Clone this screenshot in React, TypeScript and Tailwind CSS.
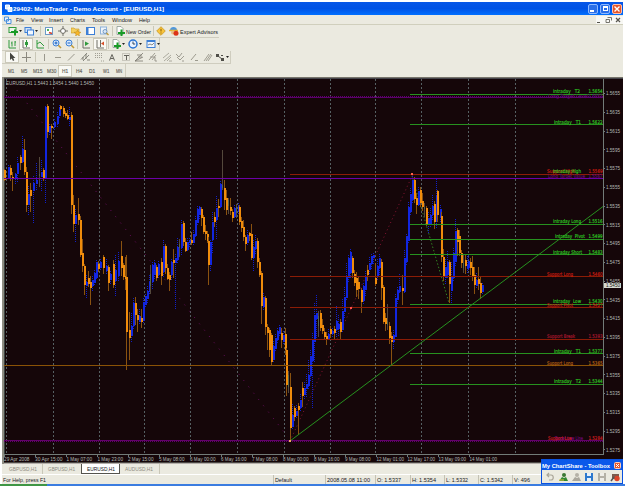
import React from 'react';

type Candle = [number, number, number, number, number, 'o' | 'b' | 'g'];

// x, body top, body bottom, wick top, wick bottom, colour
const CANDLES: Candle[] = [
  [4.5,170,180,169,181,'o'],[8.5,167,178,165,179,'b'],[10.5,168,175,165,181,'o'],[12.5,177,179,172,191,'o'],[15.5,174,179,173,184,'b'],[17.5,163,174,157,183,'b'],[20,157,163,155,170,'o'],[22.5,149,162,136,164,'b'],[24.5,150,172,139,175,'o'],[26,172,205,167,212,'o'],[28,194,205,186,215,'b'],[30,190,196,183,212,'o'],[33.5,183,191,176,224,'b'],[36,180,184,163,190,'b'],[39.5,174,176,157,187,'g'],[41.5,172,177,160,192,'b'],[43.5,170,178,168,181,'o'],[45.5,107,178,106,203,'b'],[47.5,106,132,104,138,'o'],[49.5,126,133,124,136,'b'],[51.5,126,128,124,139,'o'],[54.5,122,127,119,130,'b'],[57,116,124,112,127,'b'],[59,107,116,105,119,'b'],[60.5,106,109,105,110,'o'],[63,108,114,106,117,'o'],[65,113,116,111,118,'o'],[67,115,119,110,120,'o'],[69,117,120,107,126,'b'],
  [71,115,205,112,214,'o'],[73,205,224,195,232,'o'],[75,215,224,209,242,'b'],[78.5,214,220,198,225,'o'],[80.5,220,255,216,257,'o'],[82.5,253,266,239,272,'o'],[84.5,266,285,264,295,'o'],[86.5,282,286,275,298,'b'],[88.5,278,284,271,287,'o'],[90.5,282,288,276,305,'o'],[92.5,280,286,276,291,'b'],[94.5,273,283,270,285,'b'],[96.5,262,278,260,280,'b'],[98,264,269,261,272,'o'],[100,262,268,259,271,'b'],[103.5,257,268,255,274,'o'],[106,266,271,259,275,'b'],[108,267,283,265,291,'o'],[110.5,274,280,271,285,'b'],[113,264,285,260,288,'o'],[115.5,270,281,255,296,'b'],[118,261,276,252,282,'b'],[121,256,268,241,276,'o'],[123,265,277,263,280,'o'],[125,276,279,257,290,'o'],[126.8,277,332,255,370,'o'],[129,330,338,312,360,'o'],[131,326,336,313,342,'b'],[133,303,326,298,330,'b'],[135,303,315,297,325,'o'],[137,315,320,309,332,'o'],[139,316,322,309,324,'b'],[141,318,322,309,328,'o'],[143,302,321,298,323,'b'],[145,296,305,294,308,'b'],[147,291,299,286,303,'b'],[149,282,292,275,294,'b'],[150.7,274,286,265,294,'g'],
  [152,265,282,262,289,'b'],[154,263,275,260,279,'b'],[156,267,278,265,281,'o'],[158.5,264,275,261,278,'b'],[161,262,276,258,285,'o'],[163,246,272,240,277,'b'],[165.5,246,268,244,274,'o'],[167.5,268,279,264,280,'o'],[169.5,275,280,272,291,'o'],[171.5,262,275,259,280,'b'],[173.5,260,263,249,278,'o'],[175.5,258,263,254,309,'b'],[177.5,247,260,238,264,'b'],[179.5,244,248,239,257,'g'],[181.5,224,248,220,256,'b'],[183.5,223,242,221,246,'o'],[185.5,242,251,238,252,'o'],[187,242,250,238,252,'b'],[189,240,243,238,247,'b'],[191,240,243,232,245,'o'],[193,234,243,230,245,'b'],[195,220,236,216,237,'b'],[197,209,223,206,226,'b'],[199,207,215,206,219,'b'],[201,209,218,207,226,'o'],[203,217,232,215,234,'o'],[205,231,234,225,240,'o'],[207,234,241,231,243,'o'],[208.8,241,265,237,285,'o'],[210.5,242,265,240,272,'b'],[212.5,222,240,212,253,'b'],[214.5,217,222,212,227,'o'],[216.5,208,220,196,240,'b'],[218.5,206,208,199,217,'o'],[220.5,184,207,181,208,'b'],[222.5,185,188,150,190,'g'],[224,188,200,180,210,'o'],[226,198,210,190,215,'o'],[228,200,206,198,214,'g'],[230,207,211,198,215,'o'],[232,212,218,209,222,'o'],[234,208,217,205,219,'b'],[236,207,213,204,218,'g'],[238,206,212,203,215,'b'],[239.7,207,222,205,225,'o'],[241.7,221,228,217,232,'o'],[243.7,227,237,220,241,'o'],[245.5,237,244,235,251,'o'],[247.5,235,243,230,246,'b'],[249.5,233,236,232,241,'o'],[251.3,234,258,224,260,'o'],[253,247,258,240,271,'b'],[255,241,249,235,255,'b'],[257,241,262,238,268,'o'],[259,262,275,258,277,'o'],
  [261,273,306,271,324,'o'],[263,297,307,293,310,'b'],[265,298,327,296,335,'o'],[267,327,333,324,350,'o'],[269,330,350,328,357,'o'],[271,335,362,333,366,'o'],[273,346,360,341,363,'b'],[275,338,349,334,352,'b'],[277,331,340,328,344,'b'],[279,327,334,325,337,'b'],[281,333,340,328,348,'o'],[283,335,342,331,344,'b'],[285,334,350,328,355,'o'],[286.7,350,385,348,396,'o'],[288.5,375,387,371,393,'g'],[290,387,428,373,441,'o'],[292,415,427,404,430,'b'],[294,408,417,406,421,'o'],[296,411,416,405,419,'b'],[298,406,410,403,435,'o'],[300,400,408,394,411,'b'],[302,388,396,382,407,'o'],[304,388,395,382,400,'b'],[306,384,389,374,397,'b'],[308,375,386,360,390,'b'],[310,356,376,350,382,'b'],[312,340,361,333,408,'b'],[314,315,342,303,362,'b'],[316,313,319,295,339,'b'],[318,316,326,311,337,'g'],[320,313,328,310,331,'o'],[322,325,331,319,334,'o'],[324.5,332,337,328,340,'o'],[326.5,336,339,332,345,'o'],[328.5,334,339,329,340,'b'],[330.5,329,334,326,338,'o'],[332.5,331,334,328,337,'b'],[334.5,329,333,326,339,'o'],[336.5,321,330,306,338,'b'],[338.5,324,329,315,336,'b'],[340.5,322,332,319,339,'o'],[342.5,311,330,299,333,'b'],[344.5,297,312,287,318,'b'],[346.5,276,298,263,301,'b'],[348.5,258,278,255,282,'b'],[350.5,252,273,249,278,'b'],[352.5,258,273,256,278,'o'],[354.5,274,283,270,286,'o'],[356.5,278,290,272,297,'o'],[358.5,282,289,276,299,'o'],[361,290,302,288,313,'o'],[363,286,301,283,305,'b'],[365,276,290,271,297,'b'],[367,270,275,265,281,'o'],[369,263,270,257,274,'b'],[371,256,264,254,269,'b'],[373,255,258,253,264,'b'],[375.5,278,284,263,286,'o'],[377.5,266,276,259,281,'b'],[379.5,258,268,254,275,'b'],[381.5,262,288,259,300,'o'],[383.5,287,322,285,324,'o'],[385.5,318,324,313,331,'o'],[387,321,325,304,330,'g'],[389,326,338,322,344,'o'],[391,336,342,332,366,'o'],[393,335,342,330,350,'b'],[395,298,337,294,338,'b'],[397,290,300,287,304,'b'],[399.5,286,292,274,294,'b'],[402,288,291,275,305,'o'],[404,258,292,250,294,'b'],[406,236,262,234,266,'b'],[408,207,241,202,244,'b'],[410,194,212,188,215,'b'],[412,180,200,176,203,'b'],[414,180,199,177,203,'o'],[416,198,205,193,214,'o'],[418,191,205,187,207,'b'],[420,190,203,187,207,'o'],[422,201,207,193,211,'o'],[424,207,209,203,217,'g'],[426,208,225,206,226,'o'],[428,218,225,212,233,'b'],[430,215,225,208,227,'b'],[432,206,215,195,220,'b'],[434,204,222,201,229,'o'],[436,195,222,179,229,'b'],[437.5,191,215,190,222,'o'],[440,209,217,205,222,'b'],[441.5,216,257,212,262,'o'],[443.5,257,276,249,281,'o'],[445.5,267,278,259,285,'b'],[447.5,262,275,251,278,'b'],[449,262,284,260,303,'o'],[451,277,291,262,303,'b'],[453,253,278,248,281,'b'],[455,231,262,219,267,'b'],[457,230,242,228,256,'o'],[459,236,253,230,256,'o'],[461,253,263,250,268,'o'],[463,263,268,255,273,'g'],[465,260,266,254,274,'o'],[467,265,269,256,273,'b'],[468.5,261,268,255,271,'b'],[470.5,262,268,258,275,'o'],[472.5,267,276,256,281,'o'],[474.5,275,285,267,294,'o'],[476.5,280,286,273,288,'b'],[478.5,279,284,267,290,'o'],[480.5,283,293,276,299,'o'],[482.5,285,292,283,294,'b'],
];

const BODY = { o: '#f08c0c', b: '#1226e0', g: '#55664a' };
const WICK = { o: '#8a5210', b: '#1020c8', g: '#54483c' };

const GRID = [6.5, 53.5, 99.5, 144.5, 190.5, 237.5, 284.5, 330.5, 375.5, 421.5, 468.5, 515.5];

// start x, y, colour, dotted companion row offset
const LEVELS: [number, number, string, number?][] = [
  [4, 97.5, '#5c006c', -1], [4, 178.5, '#6c00a8'], [4, 365.5, '#8a5206'], [4, 440.5, '#62006a', 1],
  [290, 174.5, '#8c1c06'], [290, 276.5, '#8c1c06'], [290, 307.5, '#8c1c06'], [290, 339.5, '#8c1c06'],
  [410, 94.5, '#27911f'], [410, 124.5, '#27911f'], [410, 224.5, '#27911f'], [410, 239.5, '#27911f'],
  [410, 254.5, '#27911f'], [410, 304.5, '#27911f'], [410, 353.5, '#27911f'], [410, 384.5, '#27911f'],
];

// x, baseline, width, name, price, colour
const LABELS: [number, number, number, string, string, string][] = [
  [548, 97.5, 40, 'Long Target Level', '1.5653', '#5e0870'],
  [553, 93.2, 27, 'Intraday   T2', '1.5654', '#2fcf24'],
  [554, 123.6, 27, 'Intraday   T1', '1.5622', '#2fcf24'],
  [548, 177.6, 37, 'Long Target Value', '1.5567', '#650a70'],
  [547, 173.2, 28, 'Support High', '1.5569', '#d21c10'],
  [553, 173.2, 28, 'Intraday High', '', '#2fcf24'],
  [553, 223.3, 28, 'Intraday Long', '1.5516', '#2fcf24'],
  [555, 238.3, 30, 'Intraday  Pivot', '1.5499', '#2fcf24'],
  [553, 253.6, 29, 'Intraday Short', '1.5483', '#2fcf24'],
  [547, 275.8, 26, 'Support Long', '1.5460', '#d21c10'],
  [547, 306.8, 26, 'Support Pivot', '1.5427', '#c41b10'],
  [553, 303.4, 28, 'Intraday  Low', '1.5430', '#2fcf24'],
  [547, 338.3, 28, 'Support Break', '1.5393', '#b01830'],
  [554, 352.8, 27, 'Intraday   T1', '1.5377', '#2fcf24'],
  [547, 364.8, 26, 'Support Long', '1.5365', '#b86414'],
  [554, 383.3, 27, 'Intraday   T2', '1.5344', '#2fcf24'],
  [555, 440, 28, 'Target Low Line', '', '#6c0878'],
  [548, 440.1, 24, 'Support Low', '1.5284', '#d21c20'],
];

const DATES: [number, string][] = [
  [4, '29 Apr 2008'], [35, '30 Apr 15:00'], [66.5, '1 May 07:00'], [97.5, '1 May 23:00'], [128, '2 May 15:00'],
  [159, '5 May 08:00'], [190, '6 May 00:00'], [221, '6 May 16:00'], [252, '7 May 08:00'], [283, '8 May 00:00'],
  [314, '8 May 16:00'], [345, '9 May 08:00'], [376.5, '12 May 01:00'], [407.5, '12 May 17:00'], [438.5, '13 May 09:00'], [469.5, '14 May 01:00'],
];

function Chart() {
  return (
    <svg width="619" height="387" viewBox="4 77 619 387" className="block font-['Liberation_Sans',sans-serif]" shapeRendering="crispEdges">
      <rect x="4" y="77" width="619" height="387" fill="#150609" />
      <rect x="4" y="77" width="619" height="1" fill="#77756c" />
      <rect x="4" y="78" width="619" height="1" fill="#45444a" />
      <path d="M4.5 79V454" stroke="#39423f" />
      {GRID.map((x) => <path key={x} d={`M${x} 79V454`} stroke="#566063" strokeDasharray="2 2" />)}
      <g shapeRendering="auto" fill="none">
        <path d="M12 84L288 437" stroke="#6b0c62" strokeDasharray="1 7" />
        <path d="M290 441L413 174" stroke="#861432" strokeDasharray="1 3" />
        <path d="M412 176L449 303" stroke="#318022" strokeDasharray="1.5 2" />
      </g>
      {CANDLES.map(([x, t, b, wt, wb, c], i) => (
        <g key={i}>
          <path d={`M${Math.floor(x) + 0.5} ${wt}V${wb}`} stroke={WICK[c]} strokeDasharray={c === 'b' ? '1 1' : undefined} />
          <rect x={Math.floor(x)} y={t} width={c === 'g' ? 1 : 2} height={b - t} fill={BODY[c]} />
        </g>
      ))}
      {LEVELS.map(([x, y, c, d]) => (
        <g key={y} stroke={c}>
          <path d={`M${x} ${y}H603`} />
          {d && <path d={`M${x} ${y + d}H603`} strokeDasharray="1 1" />}
        </g>
      ))}
      <path d="M290 441L603 206.5" stroke="#27911f" shapeRendering="auto" />
      <rect x="411" y="173" width="2" height="2" fill="#ff6048" />
      <rect x="350" y="307" width="2" height="2" fill="#ff5048" />
      <rect x="289" y="440" width="2" height="2" fill="#f0a860" />
      <g fontSize="5.2" className="font-['DejaVu_Sans',sans-serif]">
        {LABELS.map(([x, y, w, n, p, c]) => (
          <g key={n + y} fill={c} stroke={c} strokeWidth=".15">
            <text x={x} y={y} textLength={w} lengthAdjust="spacingAndGlyphs" className="whitespace-pre">{n}</text>
            {p && <text x="588.5" y={y} textLength="14" lengthAdjust="spacingAndGlyphs">{p}</text>}
          </g>
        ))}
      </g>
      <path d="M603.5 79V454.5M4 454.5H603.5" stroke="#727b78" fill="none" />
      <g fill="#b4bab6" fontSize="5.2">
        {Array.from({ length: 20 }, (_, i) => {
          const y = 93.5 + i * 18.75;
          return (
            <g key={i}>
              <path d={`M603 ${Math.floor(y) + 0.5}h2`} stroke="#727b78" />
              <text x="606" y={y + 1.8} textLength="14" lengthAdjust="spacingAndGlyphs">{(1.5655 - i * 0.002).toFixed(4)}</text>
            </g>
          );
        })}
        {DATES.map(([x, d]) => (
          <g key={d}>
            <path d={`M${Math.floor(x) + 0.5} 454v3`} stroke="#727b78" />
            <text x={x} y="461" textLength={/^\d\d /.test(d) && d.length > 11 ? 27.5 : 25.5} lengthAdjust="spacingAndGlyphs">{d}</text>
          </g>
        ))}
        <text x="6" y="84.8" textLength="88" lengthAdjust="spacingAndGlyphs" fontSize="5.4">EURUSD,H1  1.5443 1.5454 1.5440 1.5450</text>
      </g>
      <rect x="604" y="283" width="17" height="5" fill="#d6d8d0" />
      <text x="606" y="287.3" fontSize="5.2" textLength="14" lengthAdjust="spacingAndGlyphs" fill="#151515">1.5450</text>
      <path d="M4 462.5H623" stroke="#4b4844" />
      <path d="M4 463.5H623" stroke="#b5afaa" />
    </svg>
  );
}

const G = '#2f9a3c';
const B = '#3c7fd6';
const K = '#6f6e66';

const ICONS: Record<string, React.ReactNode> = {
  newChart: <><rect x="1" y="1.5" width="7" height="5" fill="#eef7ee" stroke={G} /><path d="M3 6h8M7 3.5v6" stroke="#199b26" strokeWidth="2" /></>,
  windows: <><rect x="1" y="1.5" width="6" height="5" fill="#cfe2f8" stroke={B} /><rect x="3.5" y="4" width="6" height="5" fill="#f1f7ff" stroke={B} /></>,
  market: <><rect x="1.5" y="1.5" width="7" height="7" fill="#fff" stroke="#6c9ac8" /><path d="M3 4h2" stroke="#159a22" strokeWidth="1.6" /><path d="M5 6.5l3 1" stroke="#d2402a" strokeWidth="1.6" /></>,
  target: <><circle cx="5" cy="5" r="2.4" fill="#fff" stroke={K} /><path d="M5 0v3M5 7v3M0 5h3M7 5h3" stroke={K} /></>,
  folder: <><path d="M0 2h3l1 1h4v4H0z" fill="#f4cf5e" stroke="#c79422" strokeWidth=".6" /><path d="M6.5 4l1 2 2.5.3-2 1.4.5 2.3-2-1.2-2 1.2.5-2.3-2-1.4L5.500 6z" fill="#f7b72a" stroke="#b27c10" strokeWidth=".4" /></>,
  panel: <><rect x="1.500" y="1.500" width="8" height="7" fill="#fff" stroke={B} /><rect x="1" y="1" width="2.500" height="8" fill={B} /></>,
  tester: <><rect x="1.500" y="1" width="6" height="7" fill="#eef4fb" stroke="#8eb2da" /><circle cx="6" cy="5.500" r="2" fill="#d8e8f8" stroke="#6088b4" strokeWidth=".8" /><path d="M7.500 7l2 2" stroke="#c09830" strokeWidth="1.300" /></>,
  order: <><path d="M2 .5h4l2 2v6H2z" fill="#fff" stroke="#8c9890" strokeWidth=".8" /><path d="M3 7h7M6.500 3.500v6.500" stroke="#199b26" strokeWidth="2" /></>,
  diamond: <><path d="M5 .7L9.300 5 5 9.300.7 5z" fill="#f9c53c" stroke="#c48f18" strokeWidth=".7" /><path d="M5 2.800v2.700M5 6.500v1" stroke="#8a5c05" /></>,
  expert: <><path d="M1 4c0-4 7-4 7 0z" fill="#4e97dc" /><path d="M0 4.500h9" stroke="#e4b32e" strokeWidth="1.500" /><circle cx="4" cy="6.500" r="2" fill="#e9bd80" /><circle cx="7" cy="7.200" r="2.500" fill="#dc3418" /></>,
  bars: <path d="M2 1v8h7M5 2.500v5M5 4H4M8 2v5M8 3h1" stroke={G} />,
  candles: <><path d="M2 1v8h7" stroke={K} /><path d="M5.500 1v7" stroke={G} /><path d="M4 3h3v3H4z" fill={G} /></>,
  line: <path d="M2 1v8h7M2 5l3-2 4 4" stroke={G} />,
  zoomIn: <><circle cx="4" cy="4" r="3" fill="#d8e9fd" stroke={B} /><path d="M2.500 4h3M4 2.500v3" stroke="#1960bd" /><path d="M6.300 6.300L9 9" stroke="#c39a35" strokeWidth="1.600" /></>,
  zoomOut: <><circle cx="4" cy="4" r="3" fill="#d8e9fd" stroke={B} /><path d="M2.500 4h3" stroke="#1960bd" /><path d="M6.300 6.300L9 9" stroke="#c39a35" strokeWidth="1.600" /></>,
  scroll: <><path d="M2 1v8h7" stroke={K} /><path d="M4 2.500l4 2-4 2.500z" fill={G} /></>,
  shift: <><path d="M2 1v8h7M5.500 1v7" stroke={K} /><path d="M9 2.500v4L6 4.500z" fill="#d64d26" /></>,
  clock: <><circle cx="5" cy="5" r="4" fill="#eaf3ff" stroke="#2873d5" strokeWidth="1.500" /><path d="M5 2.500V5h2.200" stroke="#31475e" /></>,
  template: <><rect x="1" y="1.500" width="8" height="7" fill="#eff6ff" stroke={B} /><path d="M1 2h8" stroke={B} strokeWidth="2" /><path d="M2 6l2-1 2 1 2-2" stroke={K} strokeWidth=".8" /></>,
  pointer: <path d="M3 .5v7.500l1.700-1.600L6 9l1.300-.7L6.200 6h2.200z" fill="#454540" />,
  cross: <path d="M5.500 0v10M1 5.500h9" stroke="#8b897f" />,
  vline: <path d="M5.500 2v7" stroke="#9a988d" />,
  hline: <path d="M2 5.500h6" stroke="#9a988d" />,
  trend: <path d="M2 8.500L8.500 2" stroke="#9a988d" />,
  channel: <path d="M1 7.500L7 1M3 9l6-6M3 5v3M6 2v5M7 8h3" stroke={K} strokeWidth=".8" />,
  fibo: <path d="M1 1.500h7M1 3.500h7M1 5.500h7M7 9h3" stroke="#a19f94" strokeDasharray="1 1" />,
  textA: <path d="M2.500 8.500L5 2.500l2.500 6M3.400 6.500h3.300" stroke="#65645d" />,
  textT: <><rect x="1.500" y="1.500" width="7" height="7" stroke="#a7a59b" strokeDasharray="1 1" /><path d="M3 3.500h5M5.500 3.500V8" stroke="#65645d" /></>,
  fan: <path d="M1 9L9 1M1 9l8-4M1 9h8M3 3h5M4 5h4" stroke="#7b7970" strokeWidth=".8" />,
  gann: <path d="M1 8l6-7M2 5h5M4 8l4-5M7 5v4h2" stroke="#8b897e" strokeWidth=".8" />,
  fork: <path d="M1 6l6-5M2 9l7-6M5 9l4-4M7 9h3" stroke="#9c9a8e" strokeWidth=".8" />,
  waves: <path d="M1 2l3 3 3-4M2 5l3 3 4-4M7 9h2" stroke="#8b897e" strokeWidth=".8" />,
  slash: <path d="M2 8l5-6M6 8.500h3" stroke="#9c9a8e" />,
  parallel: <path d="M1 9l5-7M3 9l5-7M5 9l4-6" stroke="#a09e92" />,
  shapes: <><path d="M1 2h3v3H1zM6 6h3v3H6z" fill="#4f4e48" /><path d="M3 4l4 3M6 3.500h2" stroke="#4f4e48" /></>,
  undo: <path d="M4 1L2 3l2 2M2 3h4c3 0 3 5 0 5H4" stroke="#aaa598" strokeWidth="1.200" />,
  people: <><circle cx="6" cy="3" r="2" fill="#3b7834" /><path d="M1 9l3-4 2 1 2-1 2 4z" fill="#328831" /><path d="M1 8h5" stroke="#ddc447" /></>,
  peopleOff: <><circle cx="6" cy="3" r="2" fill="#b5b2a7" /><path d="M1 9l3-4 2 1 2-1 2 4z" fill="#aaa79d" /></>,
  save: <><path d="M1 1h8v8H1z" fill="#2c78ce" /><path d="M3 1h4v3H3zM3 6h4v3H3z" fill="#e6f0fb" /></>,
  saveOff: <><path d="M1 1h8v8H1z" fill="#b4b1a6" /><path d="M3 1h4v3H3zM3 6h4v3H3z" fill="#efeee8" /></>,
  close: <><path d="M2 2h7v5H2z" fill="#7b5a4e" /><circle cx="7" cy="6.500" r="2.700" fill="#d9442b" /><path d="M1 9l3-4" stroke="#555" strokeWidth="1.500" /></>,
};

function Icon({ n }: { n: string }) {
  return <svg width="10" height="10" viewBox="0 0 10 10" fill="none" className="block shrink-0">{ICONS[n]}</svg>;
}

function Caret() {
  return <svg width="3" height="2" viewBox="0 0 3 2" className="ml-px block shrink-0"><path d="M0 0h3L1.500 2z" fill="#222" /></svg>;
}

function Tool({ n, w, on, caret }: { n: string; w: string; on?: boolean; caret?: boolean }) {
  return (
    <div className={`flex h-[12px] shrink-0 items-center justify-center ${w} ${on ? 'border border-[#cbc9ba] bg-[#f9f9f4]' : ''}`}>
      <Icon n={n} />{caret && <Caret />}
    </div>
  );
}

function Sep({ w = 'w-[5px]' }: { w?: string }) {
  return <div className={`flex h-[10px] shrink-0 justify-center ${w}`}><div className="h-full w-px bg-[#c9c7b7]" /></div>;
}

function Label({ children, w, className = '' }: { children: string; w: number; className?: string }) {
  return (
    <svg width={w} height="9" className={`block shrink-0 overflow-visible ${className}`}>
      <text x="0" y="6.700" textLength={w} lengthAdjust="spacingAndGlyphs" fill="currentColor" fontSize="6">{children}</text>
    </svg>
  );
}

const MENU: [string, number, string][] = [
  ['File', 8, 'ml-[4px]'], ['View', 12, 'ml-[7px]'], ['Insert', 14, 'ml-[6px]'], ['Charts', 15, 'ml-[7px]'],
  ['Tools', 13, 'ml-[7px]'], ['Window', 20, 'ml-[7px]'], ['Help', 11, 'ml-[7px]'],
];

const PERIODS = ['M1', 'M5', 'M15', 'M30', 'H1', 'H4', 'D1', 'W1', 'MN'];

const STATUS: [string, number, string][] = [
  ['Default', 17, 'w-[52px]'], ['2008.05.08 11:00', 43, 'w-[50px]'], ['O: 1.5337', 24, 'w-[35px]'], ['H: 1.5354', 24, 'w-[34px]'],
  ['L: 1.5332', 22, 'w-[34px]'], ['C: 1.5342', 23, 'w-[34px]'], ['V: 496', 16, 'w-[24px]'],
];

export default function App() {
  return (
    <div className="relative flex h-[486px] w-[625px] flex-col overflow-hidden bg-white pt-[2px] font-['Liberation_Sans',sans-serif] text-[#202020]">
      <div className="mr-[2px] ml-[2px] flex h-[482px] flex-col bg-[#ebeae0]">
        <header className="flex h-[13px] shrink-0 items-center bg-linear-to-b from-[#0757e8] via-[#0052e5] to-[#0070ff] pl-[3px] text-white">
          <svg width="8" height="9" className="block"><path d="M.5 1h4v4h-4zM3 3.500h4v4H3z" fill="#d7eaff" stroke="#fff" /></svg>
          <Label w={151} className="font-bold">29402: MetaTrader - Demo Account - [EURUSD,H1]</Label>
          <div className="ml-auto flex gap-[1px] pr-px">
            <div className="flex size-[10px] items-end rounded-[2px] border border-[#8fbaff] bg-[#2b6fe8] p-px"><div className="h-[2px] w-[4px] bg-white" /></div>
            <div className="ml-[1px] flex size-[10px] items-center justify-center rounded-[2px] border border-[#8fbaff] bg-[#2b6fe8]"><div className="size-[5px] border border-t-2 border-white" /></div>
            <div className="ml-[1px] size-[10px] rounded-[2px] border border-[#ffc0a8] bg-[#e4552a]"><svg width="8" height="8" className="block"><path d="M1.500 1.500l5 5M6.500 1.500l-5 5" stroke="#fff" strokeWidth="1.400" /></svg></div>
          </div>
        </header>
        <nav className="flex h-[10px] shrink-0 items-center border-b border-[#d0cfbd] pl-[2px]">
          <svg width="8" height="8" className="block"><path d="M.5 1h4v4h-4zM2.500 3.500h4.500v4H2.500z" fill="#e9f2fe" stroke="#4c91dc" /></svg>
          {MENU.map(([t, w, m]) => <Label key={t} w={w} className={m}>{t}</Label>)}
          <div className="ml-auto flex gap-[2px] bg-[#f8f8f4] pr-[2px] text-[#55544d]">
            <svg width="7" height="8"><path d="M1 6.500h3" stroke="currentColor" /></svg>
            <svg width="7" height="8"><path d="M2.500 1.500h4v3M1 3.500h3.500v3H1z" stroke="currentColor" strokeWidth=".8" fill="none" /></svg>
            <svg width="7" height="8"><path d="M2 2l4 4M6 2L2 6" stroke="currentColor" strokeWidth="1.200" /></svg>
          </div>
        </nav>

        <div className="flex h-[13px] w-[217px] shrink-0 items-center border-b border-[#cfcdbf] pl-[4px]">
          <Tool n="newChart" w="w-[17px]" caret /><Tool n="windows" w="w-[16px]" caret /><Sep w="w-[3px]" />
          <Tool n="market" w="w-[14px]" /><Tool n="target" w="w-[13px]" /><Tool n="folder" w="w-[14px]" /><Tool n="panel" w="w-[14px]" /><Tool n="tester" w="w-[13px]" /><Sep w="w-[4px]" />
          <Tool n="order" w="w-[12px]" /><Label w={25}>New Order</Label><Sep w="w-[4px]" />
          <Tool n="diamond" w="w-[12px]" /><Tool n="expert" w="w-[13px]" /><Label w={38}>Expert Advisors</Label>
        </div>
        <div className="flex h-[13px] w-[158px] shrink-0 items-center border-r border-b border-[#cfcdbf] pl-[3px]">
          <Tool n="bars" w="w-[14px]" /><Tool n="candles" w="w-[14px]" on /><Tool n="line" w="w-[14px]" /><Sep w="w-[3px]" />
          <Tool n="zoomIn" w="w-[13px]" /><Tool n="zoomOut" w="w-[13px]" /><Sep w="w-[3px]" />
          <Tool n="scroll" w="w-[14px]" /><Tool n="shift" w="w-[14px]" on /><Sep w="w-[3px]" />
          <Tool n="order" w="w-[16px]" caret /><Tool n="clock" w="w-[18px]" caret /><Tool n="template" w="w-[17px]" caret />
        </div>
        <div className="flex h-[13px] w-[229px] shrink-0 items-center border-r border-b border-[#cfcdbf] pl-[3px]">
          <Tool n="pointer" w="w-[14px]" on /><Tool n="cross" w="w-[14px]" /><Sep w="w-[4px]" />
          <Tool n="vline" w="w-[14px]" /><Tool n="hline" w="w-[13px]" /><Tool n="trend" w="w-[14px]" /><Tool n="channel" w="w-[14px]" /><Tool n="fibo" w="w-[13px]" />
          <Tool n="textA" w="w-[14px]" /><Tool n="textT" w="w-[13px]" /><Tool n="fan" w="w-[14px]" /><Tool n="gann" w="w-[14px]" /><Tool n="fork" w="w-[13px]" />
          <Tool n="waves" w="w-[14px]" /><Tool n="slash" w="w-[14px]" /><Tool n="parallel" w="w-[13px]" /><Tool n="shapes" w="w-[15px]" caret />
        </div>
        <div className="flex h-[13px] w-[124px] shrink-0 items-center border-r border-[#cfcdbf] pl-[2px] text-[#66645b]">
          {PERIODS.map((p) => (
            <div key={p} className={`flex h-[12px] w-[13.600px] shrink-0 items-center justify-center ${p === 'H1' ? 'border border-[#cbc9ba] bg-[#f9f9f4]' : ''}`}>
              <svg width={p.length * 3.100} height="8" className="block shrink-0 overflow-visible"><text x="0" y="6" fontSize="5.300" fill="currentColor" stroke="currentColor" strokeWidth=".15" textLength={p.length * 3.100} lengthAdjust="spacingAndGlyphs">{p}</text></svg>
            </div>
          ))}
        </div>

        <main className="flex h-[387px] shrink-0 border-l-2 border-[#8f8d83]"><Chart /></main>

        <div className="flex h-[11px] shrink-0 items-start border-b border-white text-[#8d8b7f]">
          <Label w={28} className="ml-[7px]">GBPUSD,H1</Label><Sep w="w-[11px]" />
          <Label w={27}>GBPUSD,H1</Label>
          <div className="ml-[6px] flex h-[10px] w-[39px] items-start justify-center border border-t-0 border-[#55544e] bg-white text-[#111]"><Label w={28}>EURUSD,H1</Label></div>
          <Label w={28} className="ml-[5px]">AUDUSD,H1</Label><Sep w="w-[12px]" />
        </div>
        <footer className="flex h-[9px] shrink-0 items-center pl-px">
          <Label w={43}>For Help, press F1</Label>
          <div className="ml-[227px] flex">
            {STATUS.map(([t, w, c]) => <div key={t} className={`flex shrink-0 border-l border-[#c4c2b4] pl-px ${c}`}><Label w={w}>{t}</Label></div>)}
          </div>
        </footer>
      </div>
      <div className="flex h-[2px] shrink-0"><div className="w-[47px] bg-[#3f9645]" /><div className="flex-1 bg-[#3a7ce0]" /></div>

      <aside className="absolute top-[459px] left-[541px] flex h-[25px] w-[82px] flex-col border border-[#0a51e0] bg-[#ebeae0]">
        <div className="flex h-[10px] shrink-0 items-center bg-[#0a58ea] text-white">
          <Label w={68} className="font-bold">My ChartShare - Toolbox</Label>
          <svg width="7" height="7" className="ml-[4px] block"><rect x=".5" y=".5" width="6" height="6" rx="1" fill="#e4582f" stroke="#ffcdb8" /><path d="M2 2l3 3M5 2L2 5" stroke="#fff" /></svg>
        </div>
        <div className="flex flex-1 items-center pl-px">
          {['undo', 'people', 'peopleOff', 'save', 'saveOff', 'close'].map((n) => <Tool key={n} n={n} w="w-[13px]" />)}
        </div>
      </aside>
    </div>
  );
}
